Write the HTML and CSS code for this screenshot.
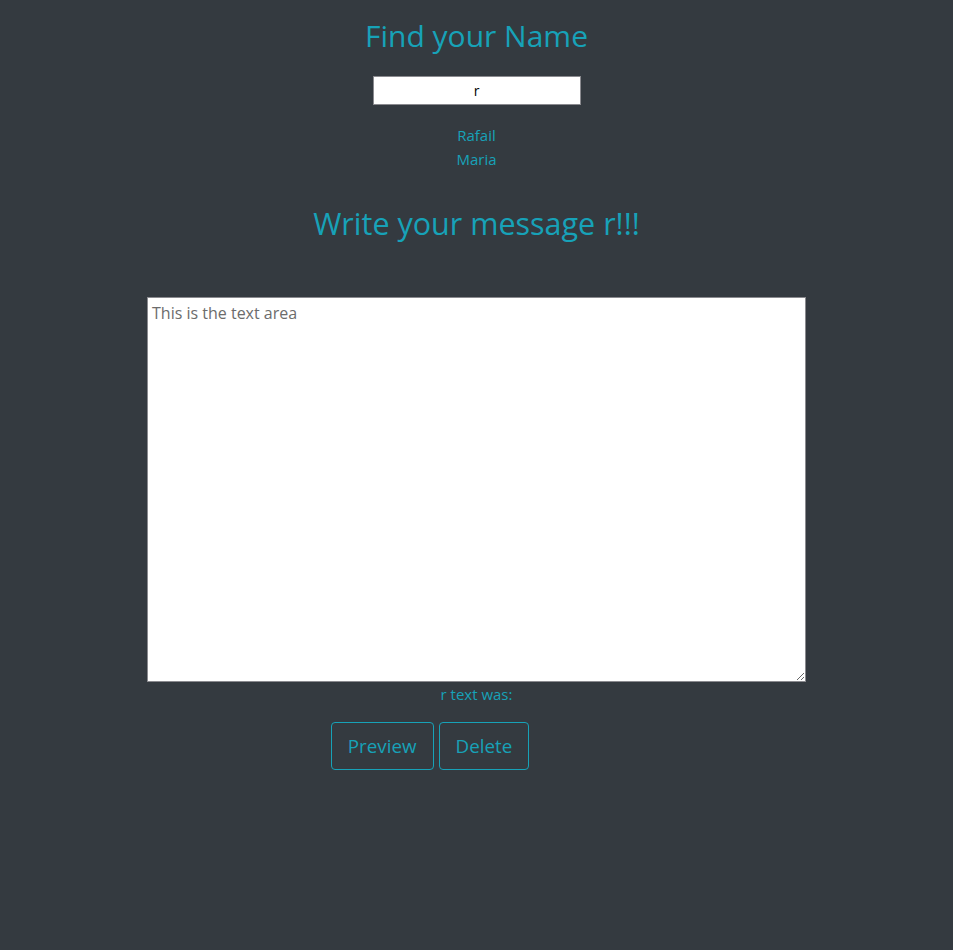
FILE: index.html
```html
<!DOCTYPE html>
<html>
<head>
<meta charset="utf-8">
<link rel="stylesheet" href="styles.css">
</head>
<body>
<div class="app">
  <h3 class="title">Find your Name</h3>
  <input class="search" type="text" value="r">
  <ul class="names">
    <li>Rafail</li>
    <li>Maria</li>
  </ul>
  <h2 class="subtitle">Write your message r!!!</h2>
  <textarea class="message" placeholder="This is the text area"></textarea>
  <p class="preview">r text was:</p>
  <div class="actions">
    <button class="btn">Preview</button>
    <button class="btn">Delete</button>
  </div>
</div>
</body>
</html>
```
FILE: styles.css
```css
html, body {
  margin: 0;
  padding: 0;
  background: #343a40;
  height: 100%;
}
body {
  font-family: "Open Sans", "Noto Sans", sans-serif;
  color: #17a2b8;
  font-size: 16px;
  line-height: 1.5;
}
.app {
  display: flex;
  flex-direction: column;
  align-items: center;
  padding-top: 18px;
}
.title {
  font-size: 30px;
  font-weight: 400;
  line-height: 1.2;
  margin: 0 0 22px;
}
.search {
  box-sizing: border-box;
  width: 208px;
  height: 29px;
  border: 1px solid #8a8a8f;
  text-align: center;
  font-family: "Open Sans", sans-serif;
  font-size: 14px;
  color: #000;
  padding: 0;
  outline: none;
}
.names {
  list-style: none;
  padding: 0;
  margin: 18px 0 0;
  text-align: center;
  font-size: 15px;
  line-height: 24px;
}
.subtitle {
  font-size: 30.5px;
  font-weight: 400;
  line-height: 1.2;
  margin: 34px 0 0;
}
.message {
  box-sizing: border-box;
  width: 659px;
  height: 385px;
  margin-top: 55px;
  border: 1px solid #8a8a8f;
  font-family: "Open Sans", sans-serif;
  font-size: 16px;
  padding: 4px;
  resize: both;
  outline: none;
}
.message::placeholder {
  color: #6c6c6c;
}
.preview {
  margin: 1px 0 0;
  font-size: 15px;
}
.actions {
  display: flex;
  gap: 5px;
  margin-top: 17px;
  margin-right: 93px;
}
.btn {
  box-sizing: border-box;
  height: 48px;
  background: transparent;
  border: 1px solid #17a2b8;
  border-radius: 4px;
  color: #17a2b8;
  font-family: "Open Sans", sans-serif;
  font-size: 18.8px;
  padding: 0 16px;
}
```
